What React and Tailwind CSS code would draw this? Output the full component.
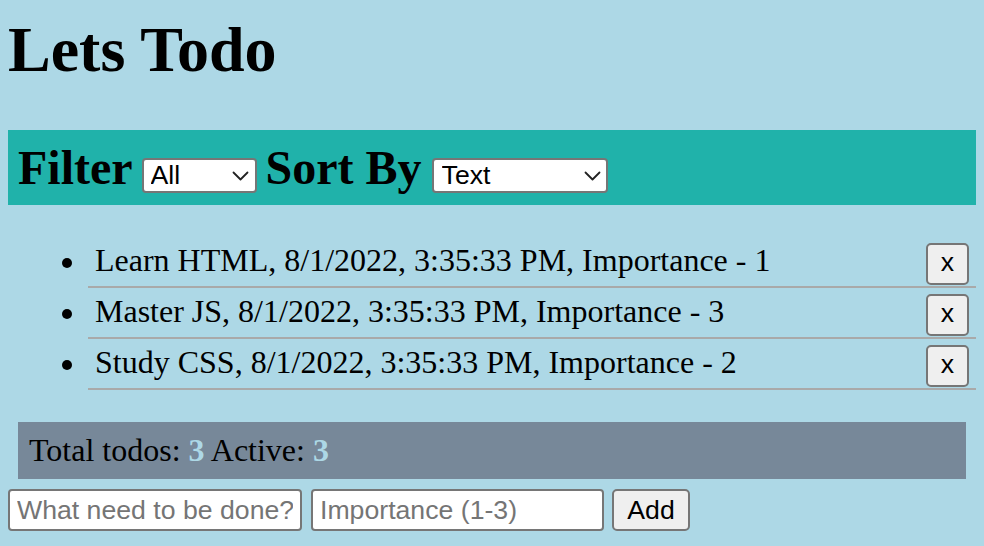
import React, { useState } from "react";

const initialTodos = [
	{ id: 1, text: "Learn HTML", date: "8/1/2022, 3:35:33 PM", importance: 1, done: false },
	{ id: 2, text: "Master JS", date: "8/1/2022, 3:35:33 PM", importance: 3, done: false },
	{ id: 3, text: "Study CSS", date: "8/1/2022, 3:35:33 PM", importance: 2, done: false },
];

const sans = "font-['Liberation_Sans',Arial,sans-serif]";

const Chevron = ({ className }) => (
	<svg
		className={className}
		width="17"
		height="10"
		viewBox="0 0 17 10"
		fill="none"
		stroke="#222"
		strokeWidth="1.8"
		strokeLinecap="round"
		strokeLinejoin="round">
		<polyline points="1.5,1.5 8.5,8.5 15.5,1.5" />
	</svg>
);

const App = () => {
	const [todos, setTodos] = useState(initialTodos);
	const [filter, setFilter] = useState("all");
	const [sortBy, setSortBy] = useState("text");
	const [text, setText] = useState("");
	const [importance, setImportance] = useState("");

	const visible = todos
		.filter((t) => (filter === "all" ? true : filter === "active" ? !t.done : t.done))
		.sort((a, b) => {
			if (sortBy === "importance") return a.importance - b.importance;
			if (sortBy === "date") return a.id - b.id;
			return a.text.localeCompare(b.text);
		});

	const handleAdd = () => {
		if (!text.trim()) return;
		setTodos([
			...todos,
			{
				id: Date.now(),
				text: text.trim(),
				date: "8/1/2022, 3:35:33 PM",
				importance: Number(importance) || 1,
				done: false,
			},
		]);
		setText("");
		setImportance("");
	};

	const removeTodo = (id) => setTodos(todos.filter((t) => t.id !== id));

	return (
		<div className="min-h-screen bg-[#add8e6] px-2 pt-[13px] pb-2 font-['Liberation_Serif','Times_New_Roman',serif] text-black">
			<h1 className="text-[64px] font-bold leading-[74px] mb-[43px]">Lets Todo</h1>

			{/* filter bar */}
			<div className="bg-[#20b2aa] px-[10px] py-[10px]">
				<h2 className="text-[48px] font-bold leading-[55px] whitespace-nowrap">
					<span>Filter</span>
					<span className="relative inline-flex ml-[9px]">
						<select
							value={filter}
							onChange={(e) => setFilter(e.target.value)}
							className={`${sans} appearance-none h-[35px] w-[115px] pl-[7px] text-[26.67px] font-normal leading-[30px] bg-white text-black border-2 border-[#767676] rounded-[4px]`}>
							<option value="all">All</option>
							<option value="active">Active</option>
							<option value="completed">Completed</option>
						</select>
						<Chevron className="pointer-events-none absolute right-[8px] top-[13px]" />
					</span>
					<span className="ml-[9px]">Sort By</span>
					<span className="relative inline-flex ml-[10px]">
						<select
							value={sortBy}
							onChange={(e) => setSortBy(e.target.value)}
							className={`${sans} appearance-none h-[35px] w-[176px] pl-[8px] text-[26.67px] font-normal leading-[30px] bg-white text-black border-2 border-[#767676] rounded-[4px]`}>
							<option value="text">Text</option>
							<option value="date">Date</option>
							<option value="importance">Importance</option>
						</select>
						<Chevron className="pointer-events-none absolute right-[7px] top-[13px]" />
					</span>
				</h2>
			</div>

			{/* list */}
			<ul className="mt-[32px] mb-[32px] text-[32px]">
				{visible.map((t) => (
					<li key={t.id} className="flex">
						<div className="w-[80px] shrink-0 flex justify-end pr-[16px] pt-[21px]">
							<span className="block w-[10px] h-[10px] rounded-full bg-black" />
						</div>
						<div className="flex-1 h-[51px] border-b-2 border-[#a9a9a9] flex items-start justify-between pl-[7px] pr-[7px]">
							<span className="leading-[37px] mt-[5px]">
								{t.text}, {t.date}, Importance - {t.importance}
							</span>
							<button
								onClick={() => removeTodo(t.id)}
								className={`${sans} mt-[6px] w-[43px] h-[42px] text-[26.67px] leading-none bg-[#efefef] border-2 border-[#767676] rounded-[5px] flex items-center justify-center pb-[3px]`}>
								x
							</button>
						</div>
					</li>
				))}
			</ul>

			{/* stats */}
			<div className="mx-[10px] bg-[#778899] px-[11px] py-[10px] text-[32px] leading-[37px]">
				Total todos: <b className="text-[#add8e6]">{todos.length}</b> Active:{" "}
				<b className="text-[#add8e6]">{todos.filter((t) => !t.done).length}</b>
			</div>

			{/* add form */}
			<div className="flex items-start mt-[10px]">
				<input
					type="text"
					value={text}
					onChange={(e) => setText(e.target.value)}
					placeholder="What need to be done?"
					className={`${sans} w-[294px] h-[42px] px-[7px] text-[26.67px] bg-white border-2 border-[#767676] rounded-[4px] placeholder:text-[#757575] outline-none`}
				/>
				<input
					type="text"
					value={importance}
					onChange={(e) => setImportance(e.target.value)}
					placeholder="Importance (1-3)"
					className={`${sans} ml-[9px] w-[293px] h-[42px] px-[7px] text-[26.67px] bg-white border-2 border-[#767676] rounded-[4px] placeholder:text-[#757575] outline-none`}
				/>
				<button
					onClick={handleAdd}
					className={`${sans} ml-[8px] w-[78px] h-[42px] text-[26.67px] leading-none bg-[#efefef] border-2 border-[#767676] rounded-[5px]`}>
					Add
				</button>
			</div>
		</div>
	);
};

export default App;
